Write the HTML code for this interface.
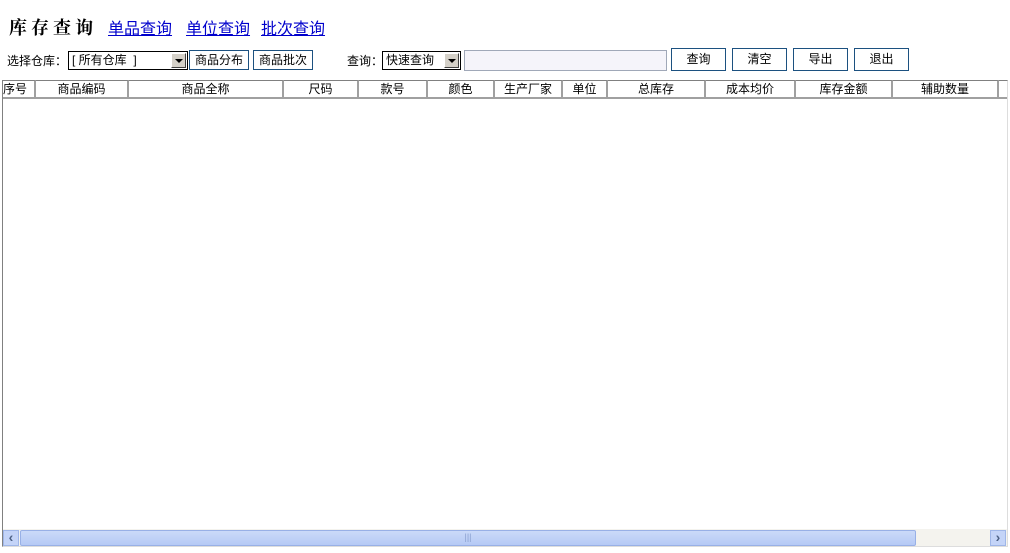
<!DOCTYPE html>
<html><head><meta charset="utf-8"><style>
body{margin:0;width:1010px;height:553px;background:#fff;position:relative;overflow:hidden;font-family:"Liberation Sans","SimSun","Noto Sans CJK SC",sans-serif;font-size:12px;color:#000}
.a{position:absolute}
.title{left:9px;top:14px;font-size:18px;font-weight:bold;letter-spacing:4px;font-family:"Noto Serif CJK SC","Noto Sans CJK SC",serif}
.lk{top:15px;font-size:16px;color:#0000cc;text-decoration:underline}
.btn{border:1px solid #1c5180;background:#fff;height:20px;box-sizing:border-box;text-align:center;line-height:18px;font-size:12px}
.sel{border:1px solid #000;height:19px;box-sizing:border-box;line-height:17px;padding-left:3px;background:#fff}
.arr{position:absolute;right:1px;top:1px;width:15px;height:15px;background:#d4d0c8;border:1px solid;border-color:#fff #404040 #404040 #fff;box-sizing:border-box}
.arr:after{content:"";position:absolute;left:3px;top:5px;border-left:4px solid transparent;border-right:4px solid transparent;border-top:4px solid #000}
.grid{left:2px;top:80px;width:1006px;height:467px;border:1px solid #808080;border-right-color:#ddd;border-bottom-color:#ddd;box-sizing:border-box}
.hd{top:80px;height:19px;border-top:1px solid #808080;border-bottom:2px solid #a0a0a0;box-sizing:border-box;text-align:center;line-height:16px;border-right:2px solid #a0a0a0;background:#fff}
.sb{top:530px;width:16px;height:16px;background:#c4d4f8;border:1px solid #9fb6e8;box-sizing:border-box;font-size:14px;font-weight:bold;line-height:13px;text-align:center;color:#4d6185}
</style></head><body>
<div class="a title">库存查询</div>
<div class="a lk" style="left:108px">单品查询</div>
<div class="a lk" style="left:186px">单位查询</div>
<div class="a lk" style="left:261px">批次查询</div>

<div class="a" style="left:7px;top:52px">选择仓库：</div>
<div class="a sel" style="left:68px;top:51px;width:120px">[ 所有仓库&nbsp; ]<div class="arr"></div></div>
<div class="a btn" style="left:189px;top:50px;width:60px">商品分布</div>
<div class="a btn" style="left:253px;top:50px;width:60px">商品批次</div>
<div class="a" style="left:347px;top:52px">查询：</div>
<div class="a sel" style="left:382px;top:51px;width:79px">快速查询<div class="arr"></div></div>
<div class="a" style="left:464px;top:50px;width:203px;height:21px;border:1px solid #a0a8b8;background:#f5f4fa;box-sizing:border-box"></div>
<div class="a btn" style="left:671px;top:48px;width:55px;height:23px;line-height:21px">查询</div>
<div class="a btn" style="left:732px;top:48px;width:55px;height:23px;line-height:21px">清空</div>
<div class="a btn" style="left:793px;top:48px;width:55px;height:23px;line-height:21px">导出</div>
<div class="a btn" style="left:854px;top:48px;width:55px;height:23px;line-height:21px">退出</div>

<div class="a grid"></div>
<div class="a hd" style="left:3px;width:33px;text-align:left">序号</div>
<div class="a hd" style="left:36px;width:93px">商品编码</div>
<div class="a hd" style="left:129px;width:155px">商品全称</div>
<div class="a hd" style="left:284px;width:75px">尺码</div>
<div class="a hd" style="left:359px;width:69px">款号</div>
<div class="a hd" style="left:428px;width:67px">颜色</div>
<div class="a hd" style="left:495px;width:68px">生产厂家</div>
<div class="a hd" style="left:563px;width:45px">单位</div>
<div class="a hd" style="left:608px;width:98px">总库存</div>
<div class="a hd" style="left:706px;width:90px">成本均价</div>
<div class="a hd" style="left:796px;width:97px">库存金额</div>
<div class="a hd" style="left:893px;width:106px">辅助数量</div>
<div class="a hd" style="left:999px;width:8px;border-right:none"></div>

<div class="a" style="left:3px;top:529px;width:1004px;height:17px;background:#f4f3ee"></div>
<div class="a sb" style="left:3px">‹</div>
<div class="a" style="left:20px;top:530px;width:896px;height:16px;background:linear-gradient(#cbdaf8,#b5c9f5);border:1px solid #98b0e6;border-radius:2px;box-sizing:border-box;text-align:center;line-height:13px;color:#8aa0d0;font-size:9px">|||</div>
<div class="a sb" style="left:990px">›</div>
</body></html>
